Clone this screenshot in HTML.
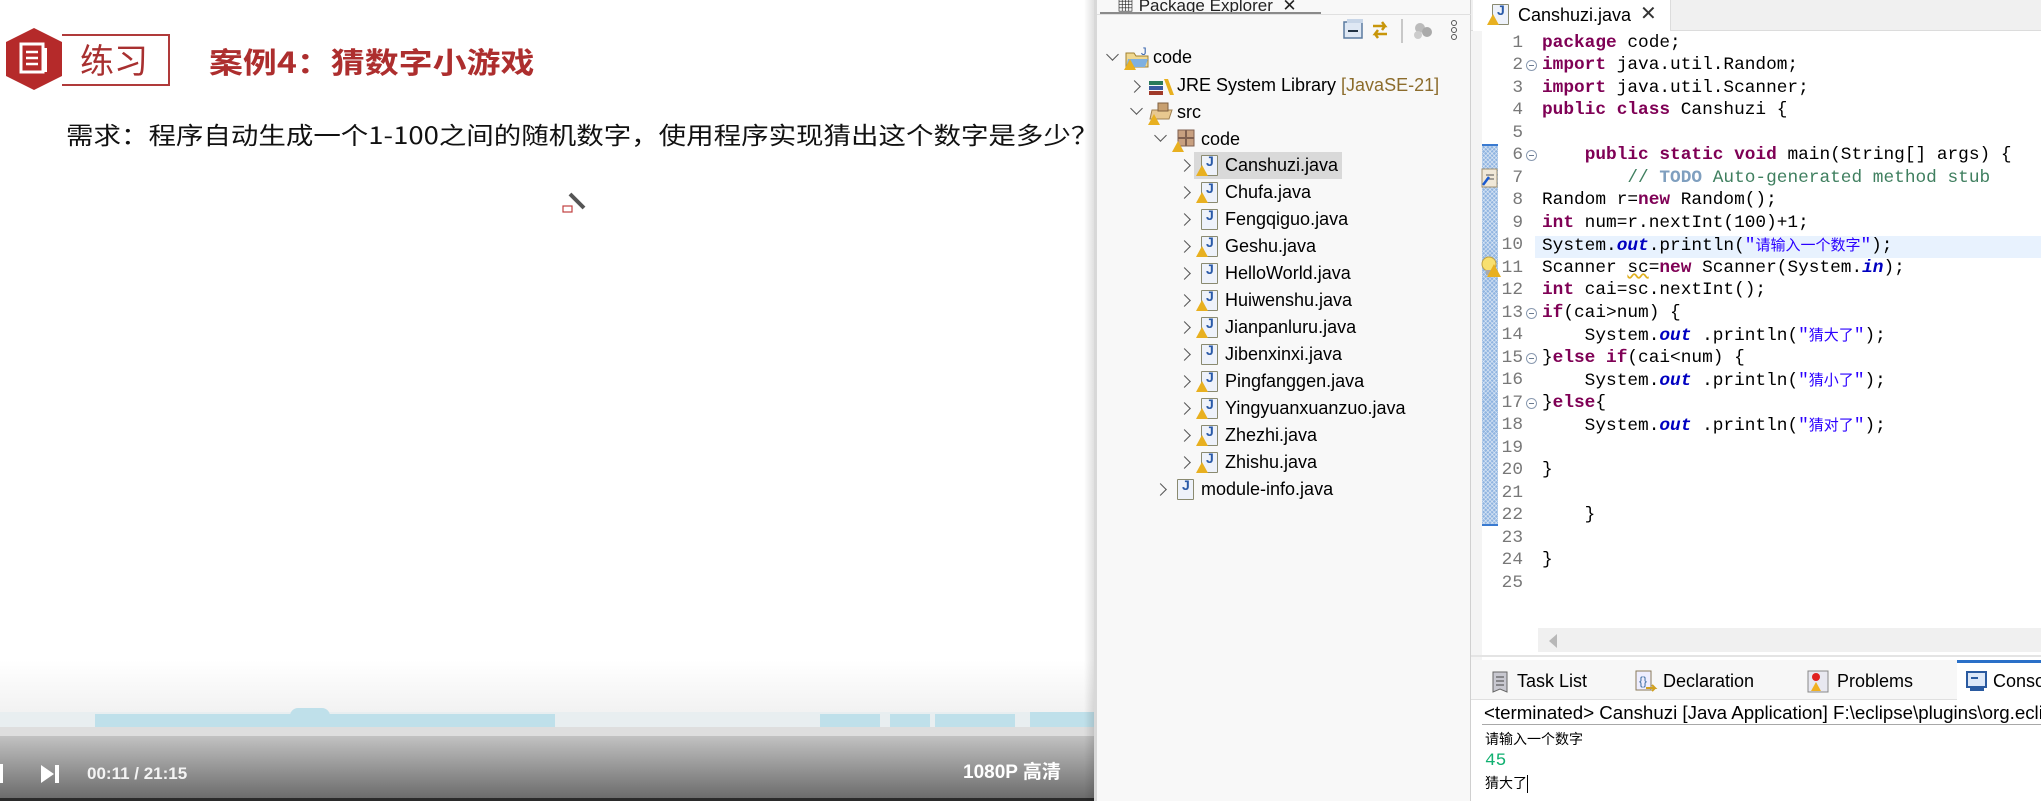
<!DOCTYPE html>
<html><head><meta charset="utf-8"><style>
*{margin:0;padding:0;box-sizing:border-box}
body{width:2041px;height:801px;overflow:hidden;position:relative;background:#fff;font-family:"Liberation Sans","Noto Sans CJK SC",sans-serif}
.a{position:absolute;white-space:nowrap}
#vid{left:0;top:0;width:1094px;height:801px;background:#fff;overflow:hidden}
#pe{left:1094px;top:0;width:377px;height:801px;background:#f8f8f8;border-left:3px solid #d8d8d8;border-right:1px solid #d0d0d0}
.row{position:absolute;height:27px;line-height:27px;font-size:18px;color:#000}
.chev{position:absolute;width:9px;height:9px;border-right:1.6px solid #555;border-bottom:1.6px solid #555}
.jf{position:absolute;width:17px;height:21px;border:1.5px solid #8a8a70;background:#eef2fa;border-radius:1px}
.jf:after{content:"J";position:absolute;left:4px;top:-3px;font:bold 14px "Liberation Sans";color:#2a5aa8}
.warn{position:absolute;width:0;height:0;border-left:6px solid transparent;border-right:6px solid transparent;border-bottom:11px solid #e8b020}
.code{position:absolute;left:1542px;font-family:"Liberation Mono",monospace;font-size:17.8px;height:22.5px;line-height:22.5px;color:#000;white-space:pre}
.ln{position:absolute;left:1480px;width:43px;text-align:right;font-family:"Liberation Mono",monospace;font-size:17.8px;line-height:22.5px;color:#787878}
.k{color:#7f0055;font-weight:bold}
.f{color:#0000c0;font-style:italic;font-weight:bold}
.s{color:#2a00ff}
.cj{font-family:"Noto Sans CJK SC",sans-serif;font-size:15px}
.fold{position:absolute;left:1526px;width:11px;height:11px;border:1px solid #8a9ab0;border-radius:50%;background:#fff}
.fold:after{content:"";position:absolute;left:2px;top:4px;width:5px;height:1px;background:#6a7a90}
.tab{position:absolute;top:662px;height:38px;line-height:38px;font-size:18px;color:#000}
</style></head><body>

<div id="vid" class="a">
  <svg class="a" style="left:6px;top:28px" width="58" height="62"><polygon points="28,0 56,14 56,48 28,62 0,48 0,14" fill="#b52a2a"/><rect x="15" y="16" width="22" height="28" fill="none" stroke="#fff" stroke-width="3"/><line x1="20" y1="24" x2="32" y2="24" stroke="#fff" stroke-width="2.5"/><line x1="20" y1="30" x2="32" y2="30" stroke="#fff" stroke-width="2.5"/><line x1="20" y1="36" x2="32" y2="36" stroke="#fff" stroke-width="2.5"/><rect x="37" y="20" width="4" height="24" fill="#fff"/></svg>
  <div class="a" style="left:62px;top:34px;width:108px;height:52px;border:2px solid #b03a3a;border-left:none"></div>
  <div class="a" style="left:80px;top:36px;font-size:34px;line-height:46px;color:#a83030;font-family:'Noto Sans CJK SC',sans-serif">练习</div>
  <div class="a" style="left:209px;top:38px;font-size:29px;line-height:46px;color:#ad2e2e;font-weight:bold;font-family:'Noto Sans CJK SC',sans-serif;transform:scaleX(1.17);transform-origin:left">案例4：猜数字小游戏</div>
  <div class="a" style="left:66px;top:118px;font-size:24px;line-height:32px;color:#111;font-family:'Noto Sans CJK SC',sans-serif;transform:scaleX(1.145);transform-origin:left">需求：程序自动生成一个1-100之间的随机数字，使用程序实现猜出这个数字是多少？</div>
  <svg class="a" style="left:562px;top:190px" width="30" height="26"><rect x="1" y="16" width="9" height="6" fill="none" stroke="#c04040" stroke-width="1.2"/><line x1="8" y1="4" x2="22" y2="18" stroke="#555" stroke-width="4"/></svg>
  <div class="a" style="left:0;top:660px;width:1094px;height:52px;background:linear-gradient(#fff,#f2f2f2)"></div>
  <div class="a" style="left:0;top:712px;width:1094px;height:15px;background:#e8eef0"></div>
  <div class="a" style="left:95px;top:714px;width:460px;height:13px;background:#bfe0ea"></div>
  <div class="a" style="left:290px;top:708px;width:40px;height:19px;background:#bfe0ea;border-radius:8px 8px 0 0"></div>
  <div class="a" style="left:820px;top:714px;width:60px;height:13px;background:#bfe0ea"></div>
  <div class="a" style="left:890px;top:714px;width:40px;height:13px;background:#bfe0ea"></div>
  <div class="a" style="left:935px;top:714px;width:80px;height:13px;background:#bfe0ea"></div>
  <div class="a" style="left:1030px;top:712px;width:64px;height:15px;background:#bfe0ea"></div>
  <div class="a" style="left:0;top:727px;width:1094px;height:9px;background:#dedede"></div>
  <div class="a" style="left:0;top:736px;width:1094px;height:62px;background:linear-gradient(#c2c2c2,#6c6c6c)"></div>
  <div class="a" style="left:0;top:798px;width:1094px;height:3px;background:#2a2a2a"></div>
  <div class="a" style="left:0;top:764px;width:3px;height:19px;background:#fff"></div>
  <svg class="a" style="left:41px;top:765px" width="20" height="18"><polygon points="0,0 13,9 0,18" fill="#fff"/><rect x="14" y="0" width="4" height="18" fill="#fff"/></svg>
  <div class="a" style="left:87px;top:763px;font-size:17px;line-height:22px;color:#f4f4f4;font-weight:bold">00:11 / 21:15</div>
  <div class="a" style="left:963px;top:761px;font-size:19px;line-height:24px;color:#fff;font-weight:bold;font-family:'Liberation Sans','Noto Sans CJK SC',sans-serif">1080P 高清</div>
  <div class="a" style="left:1084px;top:0;width:10px;height:801px;background:linear-gradient(90deg,rgba(0,0,0,0),rgba(0,0,0,0.12))"></div>
</div>

<div id="pe" class="a">
  <div class="a" style="left:20px;top:-9px;font-size:17px;color:#222">&#9638; Package Explorer &nbsp;✕</div>
  <div class="a" style="left:3px;top:12px;width:221px;height:3px;background:#8a8a8a"></div>
  <div class="a" style="left:0;top:14px;width:376px;height:1px;background:#e0e0e0"></div>
</div>
<svg class="a" style="left:1343px;top:19px" width="120" height="24"><rect x="1" y="3" width="18" height="16" fill="#dfe8f4" stroke="#5a7aa0" stroke-width="1.5"/><rect x="4" y="0" width="16" height="4" fill="#c8d6e8"/><line x1="5" y1="12" x2="15" y2="12" stroke="#234" stroke-width="2"/><path d="M30 7h12l-3-4M42 7l-3 4M44 15h-12l3-4M32 15l3 4" stroke="#c8960a" stroke-width="2.5" fill="none"/><line x1="59" y1="0" x2="59" y2="24" stroke="#999"/><circle cx="77" cy="9" r="5" fill="#bbb"/><circle cx="84" cy="13" r="5" fill="#aaa"/><circle cx="75" cy="16" r="4" fill="#ccc"/><circle cx="111" cy="4" r="2.5" fill="none" stroke="#555"/><circle cx="111" cy="11" r="2.5" fill="none" stroke="#555"/><circle cx="111" cy="18" r="2.5" fill="none" stroke="#555"/></svg>

<div class="a" style="left:1194px;top:152px;width:148px;height:27px;background:#d9d9d9"></div>
<div class="chev" style="left:1108px;top:50px;transform:rotate(45deg)"></div>
<svg class="a" style="left:1124px;top:45px" width="26" height="26"><path d="M2 8h8l2 3h12v11H2z" fill="#f0d890" stroke="#a08030"/><path d="M4 14h20l-3 8H2z" fill="#7fb0e0"/><text x="17" y="10" font-size="11" fill="#2a5aa8" font-family="Liberation Sans">J</text><polygon points="6,14 12,25 0,25" fill="#e8b020"/></svg>
<div class="row" style="left:1153px;top:44px">code</div>
<div class="chev" style="left:1130px;top:82px;transform:rotate(-45deg)"></div>
<svg class="a" style="left:1148px;top:75px" width="26" height="22"><rect x="1" y="6" width="14" height="4" fill="#2a7a5a"/><rect x="1" y="11" width="14" height="4" fill="#3a5aa0"/><rect x="1" y="16" width="14" height="4" fill="#a03a2a"/><path d="M16 4l4 0 6 16h-4z" fill="#e8b020"/></svg>
<div class="row" style="left:1177px;top:72px">JRE System Library <span style="color:#8c6c2c">[JavaSE-21]</span></div>
<div class="chev" style="left:1132px;top:104px;transform:rotate(45deg)"></div>
<svg class="a" style="left:1148px;top:100px" width="26" height="26"><path d="M4 10h20l-3 9H2z" fill="#e8c890" stroke="#a08050"/><rect x="10" y="3" width="10" height="8" fill="#c8a070" stroke="#806040"/><polygon points="6,14 12,25 0,25" fill="#e8b020"/></svg>
<div class="row" style="left:1177px;top:99px">src</div>
<div class="chev" style="left:1156px;top:131px;transform:rotate(45deg)"></div>
<svg class="a" style="left:1172px;top:127px" width="26" height="26"><rect x="6" y="3" width="16" height="16" fill="#c8a080" stroke="#806050"/><line x1="14" y1="3" x2="14" y2="19" stroke="#806050" stroke-width="2"/><line x1="6" y1="11" x2="22" y2="11" stroke="#806050" stroke-width="2"/><polygon points="6,14 12,25 0,25" fill="#e8b020"/></svg>
<div class="row" style="left:1201px;top:126px">code</div>

<div id="files"></div>
<script>
var files=[["Canshuzi.java",1],["Chufa.java",1],["Fengqiguo.java",0],["Geshu.java",1],["HelloWorld.java",0],["Huiwenshu.java",1],["Jianpanluru.java",1],["Jibenxinxi.java",0],["Pingfanggen.java",1],["Yingyuanxuanzuo.java",1],["Zhezhi.java",1],["Zhishu.java",1]];
var h="";
files.forEach(function(f,i){var c=58+(i+4)*27;
h+='<div class="chev" style="left:1180px;top:'+(c-5)+'px;transform:rotate(-45deg)"></div>';
h+='<div class="jf" style="left:1201px;top:'+(c-11)+'px"></div>';
if(f[1])h+='<div class="warn" style="left:1196px;top:'+(c-1)+'px"></div>';
h+='<div class="row" style="left:1225px;top:'+(c-14)+'px">'+f[0]+'</div>';});
var c=58+16*27;
h+='<div class="chev" style="left:1156px;top:'+(c-5)+'px;transform:rotate(-45deg)"></div>';
h+='<div class="jf" style="left:1177px;top:'+(c-11)+'px"></div>';
h+='<div class="row" style="left:1201px;top:'+(c-14)+'px">module-info.java</div>';
document.getElementById("files").innerHTML=h;
</script>

<div class="a" style="left:1471px;top:0;width:570px;height:31px;background:#f0f0f0;border-bottom:1px solid #dcdcdc"></div>
<div class="a" style="left:1473px;top:0;width:198px;height:31px;background:#fff;border-right:1px solid #dcdcdc"></div>
<div class="jf" style="left:1492px;top:4px"></div>
<div class="warn" style="left:1487px;top:14px"></div>
<div class="a" style="left:1518px;top:2px;font-size:18px;line-height:27px">Canshuzi.java</div>
<div class="a" style="left:1640px;top:1px;font-size:20px;line-height:27px;color:#333">✕</div>
<div class="a" style="left:1471px;top:31px;width:11px;height:629px;background:#f4f4f4"></div>
<div class="a" style="left:1482px;top:144px;width:16px;height:382px;background:#8fb4e0;background-image:repeating-linear-gradient(45deg,rgba(255,255,255,.45) 0 1px,transparent 1px 3px),repeating-linear-gradient(-45deg,rgba(255,255,255,.45) 0 1px,transparent 1px 3px)"></div>
<div class="a" style="left:1482px;top:144px;width:16px;height:2px;background:#3a7ad0"></div>
<div class="a" style="left:1482px;top:524px;width:16px;height:2px;background:#3a7ad0"></div>
<svg class="a" style="left:1481px;top:167px" width="18" height="22"><rect x="1" y="2" width="15" height="18" fill="#f0e8d8" stroke="#a09070"/><line x1="5" y1="8" x2="13" y2="8" stroke="#555"/><line x1="5" y1="12" x2="13" y2="12" stroke="#555"/><path d="M2 18l6-8" stroke="#1a5ad0" stroke-width="2.5"/></svg>
<svg class="a" style="left:1481px;top:256px" width="20" height="22"><circle cx="8" cy="8" r="7" fill="#f8e070" stroke="#c0a040"/><rect x="5" y="14" width="6" height="5" fill="#aaa"/><polygon points="13,8 20,21 6,21" fill="#e8b020"/></svg>
<div class="a" style="left:1535px;top:235.5px;width:506px;height:22.5px;background:#e8f2fe"></div>

<div id="code"></div>
<script>
var L=['<span class="k">package</span> code;',
'<span class="k">import</span> java.util.Random;',
'<span class="k">import</span> java.util.Scanner;',
'<span class="k">public</span> <span class="k">class</span> Canshuzi {',
'',
'    <span class="k">public</span> <span class="k">static</span> <span class="k">void</span> main(String[] args) {',
'        <span style="color:#3f7f5f">// <b style="color:#7f9fbf">TODO</b> Auto-generated method stub</span>',
'Random r=<span class="k">new</span> Random();',
'<span class="k">int</span> num=r.nextInt(100)+1;',
'System.<span class="f">out</span>.println(<span class="s">"<span class="cj">请输入一个数字</span>"</span>);',
'Scanner <span style="text-decoration:underline wavy #e0b020">sc</span>=<span class="k">new</span> Scanner(System.<span class="f">in</span>);',
'<span class="k">int</span> cai=sc.nextInt();',
'<span class="k">if</span>(cai&gt;num) {',
'    System.<span class="f">out</span> .println(<span class="s">"<span class="cj">猜大了</span>"</span>);',
'}<span class="k">else</span> <span class="k">if</span>(cai&lt;num) {',
'    System.<span class="f">out</span> .println(<span class="s">"<span class="cj">猜小了</span>"</span>);',
'}<span class="k">else</span>{',
'    System.<span class="f">out</span> .println(<span class="s">"<span class="cj">猜对了</span>"</span>);',
'','}','','    }','','}',''];
var h="";var folds=[2,6,13,15,17];
L.forEach(function(s,i){var t=31.75+i*22.5;
h+='<div class="ln" style="top:'+t+'px">'+(i+1)+'</div>';
if(folds.indexOf(i+1)>=0)h+='<div class="fold" style="top:'+(t+6)+'px"></div>';
h+='<div class="code" style="top:'+t+'px">'+s+'</div>';});
document.getElementById("code").innerHTML=h;
</script>

<div class="a" style="left:1538px;top:628px;width:503px;height:24px;background:#f0f0f0"></div>
<svg class="a" style="left:1547px;top:634px" width="12" height="14"><polygon points="10,0 10,14 2,7" fill="#b8b8b8"/></svg>
<div class="a" style="left:1471px;top:655px;width:570px;height:2px;background:#e4e4e4"></div>

<div class="a" style="left:1471px;top:660px;width:570px;height:40px;background:#f7f7f7;border-bottom:1px solid #e0e0e0"></div>
<div class="a" style="left:1957px;top:660px;width:84px;height:40px;background:#fff;border-top:3px solid #2a70c8"></div>
<svg class="a" style="left:1491px;top:670px" width="20" height="24"><path d="M2 2h14v20l-7-3-7 3z" fill="#c8c8d0" stroke="#666"/><line x1="5" y1="7" x2="13" y2="7" stroke="#444"/><line x1="5" y1="11" x2="13" y2="11" stroke="#444"/><line x1="5" y1="15" x2="13" y2="15" stroke="#444"/></svg>
<div class="tab" style="left:1517px">Task List</div>
<svg class="a" style="left:1634px;top:670px" width="24" height="24"><rect x="2" y="1" width="15" height="19" fill="#eef" stroke="#8a7a5a"/><text x="5" y="15" font-size="12" fill="#3a6aa0" font-family="Liberation Sans">{}</text><path d="M12 18h9l-3-3M21 18l-3 3" stroke="#d0a020" stroke-width="2" fill="none"/></svg>
<div class="tab" style="left:1663px">Declaration</div>
<svg class="a" style="left:1807px;top:670px" width="24" height="24"><rect x="1" y="1" width="20" height="21" fill="#e8e8f0" stroke="#888"/><circle cx="9" cy="7" r="4" fill="#e02020"/><polygon points="9,12 14,21 4,21" fill="#f0b020"/></svg>
<div class="tab" style="left:1837px">Problems</div>
<svg class="a" style="left:1966px;top:671px" width="22" height="22"><rect x="1" y="1" width="19" height="15" fill="#dde8f8" stroke="#2a5aa0" stroke-width="2"/><line x1="5" y1="7" x2="12" y2="7" stroke="#2a5aa0" stroke-width="2"/><rect x="4" y="17" width="14" height="3" fill="#2a5aa0"/></svg>
<div class="tab" style="left:1993px">Console</div>
<div class="a" style="left:1471px;top:701px;width:570px;height:100px;background:#fff"></div>
<div class="a" style="left:1484px;top:701px;font-size:18.7px;line-height:24px;color:#000">&lt;terminated&gt; Canshuzi [Java Application] F:\eclipse\plugins\org.eclipse</div>
<div class="a" style="left:1482px;top:724px;width:559px;height:1px;background:#a8a8a8"></div>
<div class="a" style="left:1485px;top:728px;font-size:14px;line-height:22px;font-family:'Noto Sans CJK SC',sans-serif">请输入一个数字</div>
<div class="a" style="left:1485px;top:750px;font-size:17.8px;line-height:22px;font-family:'Liberation Mono',monospace;color:#10b070">45</div>
<div class="a" style="left:1485px;top:772px;font-size:14px;line-height:22px;font-family:'Noto Sans CJK SC',sans-serif">猜大了<span style="display:inline-block;width:1px;height:18px;background:#000;vertical-align:middle"></span></div>
</body></html>
